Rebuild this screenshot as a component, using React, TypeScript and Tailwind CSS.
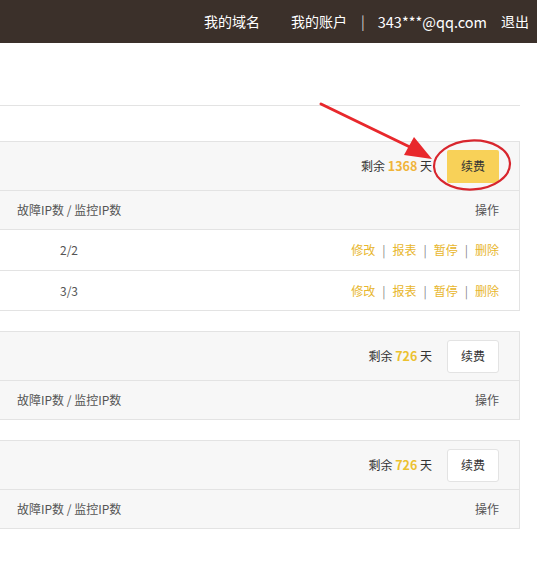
import React from "react";

const font = { fontFamily: '"Noto Sans CJK SC", "Noto Sans", sans-serif' };

function Card({
  days,
  highlight,
  rows,
}: {
  days: string;
  highlight?: boolean;
  rows: string[];
}) {
  return (
    <div className="w-[520px] border-t border-r border-b border-[#e3e3e3]">
      <div className="h-[49px] bg-[#f7f7f7] border-b border-[#e3e3e3] flex items-center justify-end pr-[20px]">
        <span className="text-[12px] text-[#333]">
          剩余{" "}
          <span className={`font-bold text-[12.5px] ${highlight ? "text-[#f0b43a]" : "text-[#ecc12f]"}`}>{days}</span>{" "}
          天
        </span>
        {highlight ? (
          <button className="ml-[15px] w-[52px] h-[33px] rounded-[2px] bg-[#f8d158] text-[12px] text-[#333]">
            续费
          </button>
        ) : (
          <button className="ml-[15px] w-[52px] h-[33px] rounded-[3px] bg-white border border-[#e3e3e3] text-[12px] text-[#333]">
            续费
          </button>
        )}
      </div>
      <div className="h-[38px] bg-[#f7f7f7] flex items-center justify-between pl-[17px] pr-[20px] text-[12px] text-[#555]">
        <span>故障IP数 / 监控IP数</span>
        <span>操作</span>
      </div>
      {rows.map((r, i) => (
        <div
          key={r}
          className={`${i === rows.length - 1 ? "h-10" : "h-[41px]"} bg-white border-t border-[#e3e3e3] flex items-center justify-between pr-[20px] text-[12px]`}
        >
          <span className="w-[138px] text-center text-[#555]">{r}</span>
          <span className="flex items-center text-[#e8b62c]">
            <span>修改</span>
            <span className="mx-[7px] text-[#888]">|</span>
            <span>报表</span>
            <span className="mx-[7px] text-[#888]">|</span>
            <span>暂停</span>
            <span className="mx-[7px] text-[#888]">|</span>
            <span>删除</span>
          </span>
        </div>
      ))}
    </div>
  );
}

export default function App() {
  return (
    <div className="relative w-[537px] h-[568px] bg-white overflow-hidden" style={font}>
      <div className="h-[43px] bg-[#3b302a] flex items-center justify-end pr-[8px] text-[14px] text-white">
        <span>我的域名</span>
        <span className="ml-[31px]">我的账户</span>
        <span className="ml-[14px] mr-[13px] text-[#cfcfcf]">|</span>
        <span className="text-[14.5px]">343***@qq.com</span>
        <span className="ml-[14px]">退出</span>
      </div>
      <div className="h-[62px]" />
      <div className="w-[520px] border-t border-[#e3e3e3]" />
      <div className="h-[35px]" />
      <div className="flex flex-col gap-[20px]">
        <Card days="1368" highlight rows={["2/2", "3/3"]} />
        <Card days="726" rows={[]} />
        <Card days="726" rows={[]} />
      </div>
      <svg className="absolute left-0 top-0 pointer-events-none" width="537" height="568">
        <line x1="321" y1="104" x2="414" y2="149" stroke="#e8282c" strokeWidth="3" strokeLinecap="round" />
        <polygon points="432,159 404,155 414,137" fill="#e8282c" />
        <ellipse cx="472" cy="165" rx="38" ry="24.5" fill="none" stroke="#d8262e" strokeWidth="2.2" transform="rotate(-3 472 165)" />
      </svg>
    </div>
  );
}
